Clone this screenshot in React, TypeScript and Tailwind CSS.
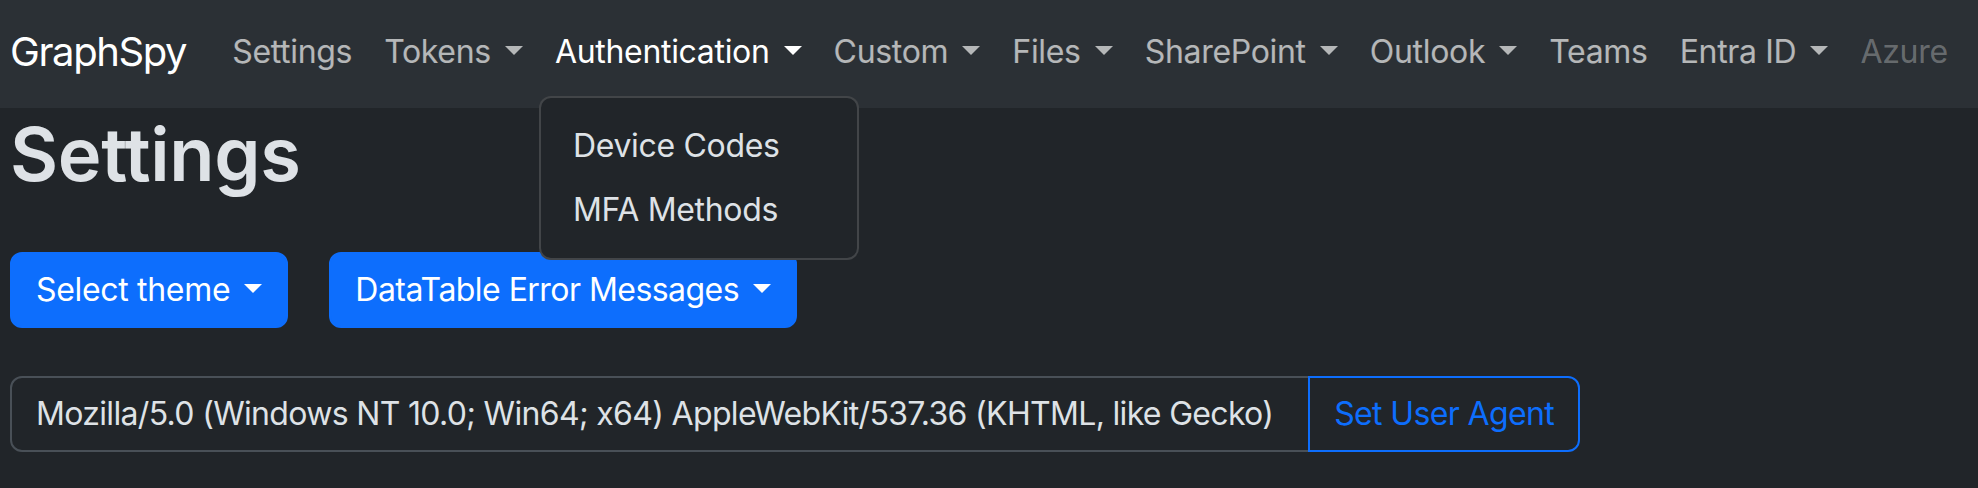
import React from "react";

interface NavItem {
  label: string;
  dropdown?: boolean;
  active?: boolean;
  disabled?: boolean;
}

const navItems: NavItem[] = [
  { label: "Settings" },
  { label: "Tokens", dropdown: true },
  { label: "Authentication", dropdown: true, active: true },
  { label: "Custom", dropdown: true },
  { label: "Files", dropdown: true },
  { label: "SharePoint", dropdown: true },
  { label: "Outlook", dropdown: true },
  { label: "Teams" },
  { label: "Entra ID", dropdown: true },
  { label: "Azure", disabled: true },
];

const authMenu = ["Device Codes", "MFA Methods"];

// bootstrap-style toggle caret, drawn with borders in the current text colour
const Caret: React.FC = () => (
  <span className="inline-block ml-[0.44em] align-[0.255em] border-t-[0.29em] border-x-[0.29em] border-b-0 border-x-transparent" />
);

const Navbar: React.FC = () => (
  <nav className="bg-[#2b3035] flex items-center pl-[10px] pt-[12px] pb-[16px]">
    <a className="text-white text-[40px] leading-[60px] mr-[30px] tracking-[-0.035em]">GraphSpy</a>
    <ul className="flex items-center">
      {navItems.map((item) => (
        <li key={item.label} className="relative">
          <a
            className={`block px-4 py-4 text-[32px] leading-[48px] tracking-[-0.01em] ${
              item.active
                ? "text-white"
                : item.disabled
                ? "text-white/30"
                : "text-white/65"
            }`}
          >
            {item.label}
            {item.dropdown && <Caret />}
          </a>
          {item.active && (
            <div className="absolute left-0 top-full mt-[4px] w-[320px] py-4 bg-[#212529] border-2 border-white/15 rounded-[12px] z-10">
              {authMenu.map((entry) => (
                <a
                  key={entry}
                  className="block px-8 py-2 text-[32px] leading-[48px] text-[#dee2e6] tracking-[-0.01em]"
                >
                  {entry}
                </a>
              ))}
            </div>
          )}
        </li>
      ))}
    </ul>
  </nav>
);

export default function App() {
  return (
    <div
      className="min-h-screen bg-[#212529] text-[#dee2e6]"
      style={{ fontFamily: "Inter, 'Noto Sans', sans-serif" }}
    >
      <Navbar />
      <main className="px-[10px]">
        <h1 className="mt-[2px] text-[74px] leading-[88px] font-semibold tracking-[-0.005em]">
          Settings
        </h1>

        <div className="mt-[54px] flex gap-[41px]">
          <button className="px-[24px] py-[12px] text-[32px] leading-[48px] text-white bg-[#0d6efd] border-2 border-[#0d6efd] rounded-[12px] tracking-[-0.01em]">
            Select theme
            <Caret />
          </button>
          <button className="px-[24px] py-[12px] text-[32px] leading-[48px] text-white bg-[#0d6efd] border-2 border-[#0d6efd] rounded-[12px] tracking-[-0.017em]">
            DataTable Error Messages
            <Caret />
          </button>
        </div>

        <div className="mt-[48px] flex w-[1570px]">
          <input
            readOnly
            value="Mozilla/5.0 (Windows NT 10.0; Win64; x64) AppleWebKit/537.36 (KHTML, like Gecko)"
            className="flex-1 min-w-0 px-[24px] py-[12px] text-[32px] leading-[48px] bg-[#212529] text-[#dee2e6] border-2 border-[#495057] rounded-l-[12px] outline-none tracking-[-0.021em]"
          />
          <button className="-ml-[2px] px-[24px] py-[12px] text-[32px] leading-[48px] text-[#0d6efd] border-2 border-[#0d6efd] rounded-r-[12px] tracking-[-0.02em]">
            Set User Agent
          </button>
        </div>
      </main>
    </div>
  );
}
